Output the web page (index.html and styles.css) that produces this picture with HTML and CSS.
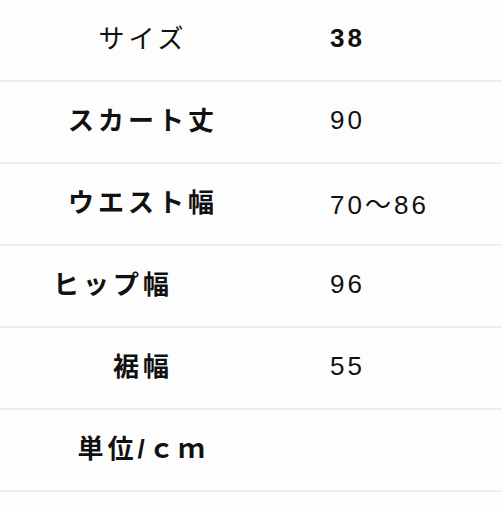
FILE: index.html
```html
<!DOCTYPE html>
<html lang="ja">
<head>
<meta charset="utf-8">
<title>サイズ表</title>
<link rel="stylesheet" href="styles.css">
</head>
<body>
<div class="size-table">
  <div class="row">
    <div class="label normal">サイズ</div>
    <div class="value bold">38</div>
  </div>
  <div class="row">
    <div class="label">スカート丈</div>
    <div class="value">90</div>
  </div>
  <div class="row">
    <div class="label">ウエスト幅</div>
    <div class="value">70〜86</div>
  </div>
  <div class="row">
    <div class="label">ヒップ幅　　</div>
    <div class="value">96</div>
  </div>
  <div class="row">
    <div class="label">裾幅</div>
    <div class="value">55</div>
  </div>
  <div class="row">
    <div class="label">単位/ｃｍ</div>
    <div class="value"></div>
  </div>
</div>
</body>
</html>
```
FILE: styles.css
```css
html, body {
  margin: 0;
  padding: 0;
  background: #fdfdfd;
}
body {
  font-family: "Liberation Sans", "Noto Sans CJK JP", sans-serif;
  font-size: 26px;
  letter-spacing: 3px;
  color: #111;
}
.size-table {
  display: flex;
  flex-direction: column;
}
.row {
  display: grid;
  grid-template-columns: 286px 1fr;
  height: 80px;
  border-bottom: 2px solid #efefef;
}
.label, .value {
  display: flex;
  align-items: center;
  padding-bottom: 4px;
  white-space: pre;
}
.label {
  justify-content: center;
  font-weight: bold;
  letter-spacing: 4px;
  padding-bottom: 8px;
}
.label.normal {
  font-weight: normal;
}
.value {
  padding-left: 44px;
  font-weight: normal;
}
.value.bold {
  font-weight: bold;
}
```
